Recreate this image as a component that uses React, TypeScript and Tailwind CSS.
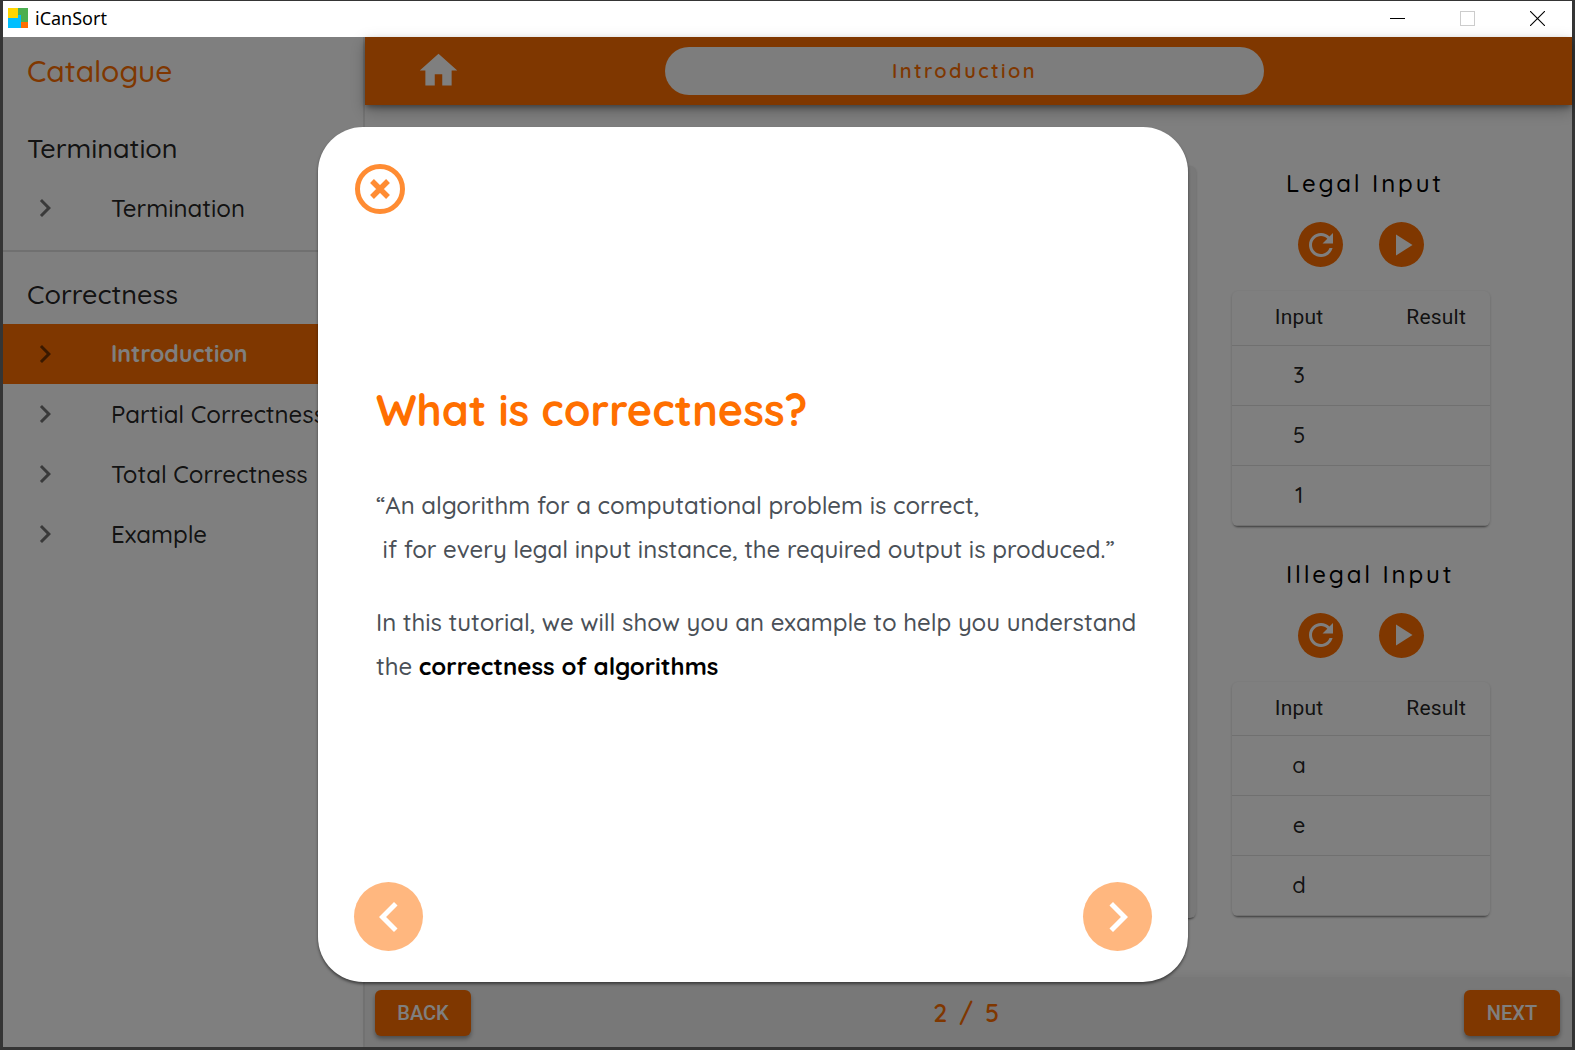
import React from "react";

const chevronRight = "M10 6 8.59 7.41 13.17 12l-4.58 4.59L10 18l6-6z";
const chevronLeft = "M15.41 7.41 14 6l-6 6 6 6 1.41-1.41L10.83 12z";

function Icon({ d, className }: { d: string; className: string }) {
  return (
    <svg viewBox="0 0 24 24" fill="currentColor" aria-hidden="true" className={className}>
      <path d={d} />
    </svg>
  );
}

function TitleBar() {
  return (
    <header className="flex h-9 items-center bg-white pb-0.5">
      <svg viewBox="0 0 20 20" shapeRendering="crispEdges" aria-hidden="true" className="ml-[5px] size-5">
        <rect width="10" height="10" fill="#ffd600" />
        <rect x="10" width="10" height="14" fill="#4caf50" />
        <path d="M0 10h10V7h3v13H0z" fill="#00bfff" />
        <rect x="13" y="14" width="7" height="6" fill="#ff6f00" />
      </svg>
      <span className="ml-[7px] font-['Noto_Sans',sans-serif] text-[18px] leading-6 text-black">iCanSort</span>
      <div className="ml-auto flex h-full">
        <button aria-label="Minimize" className="flex w-[70px] items-center justify-center">
          <svg viewBox="0 0 15 15" shapeRendering="crispEdges" className="size-[15px]">
            <rect y="7" width="15" height="1" fill="#000" />
          </svg>
        </button>
        <button aria-label="Maximize" disabled className="flex w-[70px] items-center justify-center">
          <span className="size-[15px] border border-[#cccccc]" />
        </button>
        <button aria-label="Close window" className="flex w-[70px] items-center justify-center">
          <svg viewBox="0 0 15 15" className="size-[15px]" stroke="#000" strokeWidth="1.1">
            <path d="M0 0l15 15M15 0L0 15" />
          </svg>
        </button>
      </div>
    </header>
  );
}

function NavGroup({ title, items, active }: { title: string; items: string[]; active?: string }) {
  return (
    <section className="py-3">
      <h2 className="pl-6 text-[27px] font-medium leading-[60px] text-black/87">{title}</h2>
      <ul>
        {items.map((item) => {
          const on = item === active;
          return (
            <li key={item}>
              <a
                href={"#" + item.toLowerCase().replace(" ", "-")}
                aria-current={on ? "page" : undefined}
                className={
                  on
                    ? "flex h-[60px] items-center gap-12 bg-[#ff6f00] pl-6 text-[23px] font-bold text-white"
                    : "flex h-[60px] items-center gap-12 pl-6 text-[24px] font-medium text-black/87"
                }
              >
                <Icon d={chevronRight} className="size-9 shrink-0 text-black/54" />
                <span className="whitespace-nowrap">{item}</span>
              </a>
            </li>
          );
        })}
      </ul>
    </section>
  );
}

function Sidebar() {
  return (
    <nav aria-label="Catalogue" className="w-[362px] shrink-0 overflow-hidden border-r-2 border-[#e8e8e8] bg-white">
      <h1 className="pl-6 text-[30px] font-medium leading-[69px] text-[#ff6f00]">Catalogue</h1>
      <NavGroup title="Termination" items={["Termination"]} />
      <hr className="border-t-2 border-[#e0e0e0]" />
      <NavGroup
        title="Correctness"
        active="Introduction"
        items={["Introduction", "Partial Correctness", "Total Correctness", "Example"]}
      />
    </nav>
  );
}

function InputPanel({ title, values }: { title: string; values: string[] }) {
  return (
    <section>
      <h3 className="pl-[54px] text-[24px] font-medium leading-[34px] tracking-[0.12em] text-black">{title}</h3>
      <div className="mt-[22px] flex justify-center gap-9">
        <button
          aria-label={"Reset " + title}
          className="flex size-[45px] items-center justify-center rounded-full bg-[#ff6f00] text-white"
        >
          <Icon
            className="size-9"
            d="M17.65 6.35C16.2 4.9 14.21 4 12 4c-4.42 0-7.99 3.58-7.99 8s3.57 8 7.99 8c3.73 0 6.84-2.55 7.73-6h-2.08c-.82 2.33-3.04 4-5.65 4-3.31 0-6-2.69-6-6s2.69-6 6-6c1.66 0 3.14.69 4.22 1.78L13 11h7V4l-2.35 2.35z"
          />
        </button>
        <button
          aria-label={"Run " + title}
          className="flex size-[45px] items-center justify-center rounded-full bg-[#ff6f00] text-white"
        >
          <Icon className="size-9" d="M8 5v14l11-7z" />
        </button>
      </div>
      <div className="mt-6 overflow-hidden rounded-md bg-white shadow-[0_3px_2px_-2px_rgba(0,0,0,0.4),0_1px_3px_rgba(0,0,0,0.2)]">
        <table className="w-full table-fixed border-collapse text-[22px] text-black/87">
          <thead>
            <tr className="h-[54px] border-b border-[#e0e0e0] font-['Roboto',sans-serif] text-[21px] tracking-[0.01em]">
              <th className="w-[52%] p-0 text-center font-normal">Input</th>
              <th className="p-0 pr-6 text-right font-normal">Result</th>
            </tr>
          </thead>
          <tbody>
            {values.map((v) => (
              <tr key={v} className="h-[60px] border-b border-[#e0e0e0]">
                <td className="p-0 text-center font-medium">{v}</td>
                <td />
              </tr>
            ))}
          </tbody>
        </table>
      </div>
    </section>
  );
}

function Workspace() {
  const navButton =
    "h-[46px] w-24 rounded-md bg-[#ff6f00] font-['Roboto',sans-serif] text-[20px] font-medium text-white shadow-[0_3px_4px_rgba(0,0,0,0.35)]";
  return (
    <div className="flex min-w-0 flex-1 flex-col bg-white">
      <div className="z-0 grid h-[68px] grid-cols-[1fr_2fr_1fr] items-center bg-[#ff6f00] pr-2 shadow-[0_3px_6px_-1px_rgba(0,0,0,0.4),0_6px_15px_rgba(0,0,0,0.26)]">
        <button aria-label="Home" className="mb-0.5 ml-[51px] size-[45px] text-white">
          <Icon className="size-[45px]" d="M10 20v-6h4v6h5v-8h3L12 3 2 12h3v8z" />
        </button>
        <div className="rounded-full bg-[#fafafa] text-center text-[20px] font-semibold leading-[48px] tracking-[0.12em] text-[#ff6f00]">
          Introduction
        </div>
      </div>
      <main className="flex flex-1 gap-9 pb-[59px] pl-9 pr-[82px] pt-[61px]">
        <div className="flex-1 rounded-md bg-[#f0f0f0] shadow-[0_3px_2px_-2px_rgba(0,0,0,0.4),0_1px_3px_rgba(0,0,0,0.2)]" />
        <div className="flex w-[258px] shrink-0 flex-col gap-[31px]">
          <InputPanel title="Legal Input" values={["3", "5", "1"]} />
          <InputPanel title="Illegal Input" values={["a", "e", "d"]} />
        </div>
      </main>
      <footer className="flex h-[70px] items-center justify-between bg-[#f0f0f0] pl-2.5 pr-3 pt-0.5 shadow-[0_-2px_8px_rgba(0,0,0,0.06)]">
        <button className={navButton}>BACK</button>
        <span className="text-[25px] font-semibold tracking-widest text-[#ff6f00]">2 / 5</span>
        <button className={navButton}>NEXT</button>
      </footer>
    </div>
  );
}

function TutorialDialog() {
  const arrow = "flex size-[69px] items-center justify-center rounded-full bg-[#ffb77f] text-white";
  return (
    <div className="absolute inset-0 z-10 bg-black/50 pb-[65px] pl-[315px] pr-6 pt-[90px]">
      <div
        role="dialog"
        aria-modal="true"
        aria-labelledby="dialog-title"
        className="flex h-full w-full max-w-[870px] flex-col rounded-[45px] bg-white px-9 pb-[31px] pt-9 shadow-[0_2px_3px_rgba(0,0,0,0.5)]"
      >
        <button aria-label="Close" className="size-[52px] text-[#ff8c33]">
          <svg viewBox="0 0 52 52" fill="none" stroke="currentColor" strokeWidth="5" className="size-[52px]">
            <circle cx="26" cy="26" r="22.5" />
            <path d="M18 18l16 16M34 18L18 34" strokeWidth="5.4" />
          </svg>
        </button>
        <div className="flex flex-1 flex-col justify-center pb-[30px] pl-[22px]">
          <h2 id="dialog-title" className="text-[43px] font-bold leading-[60px] text-[#ff6f00]">
            What is correctness?
          </h2>
          <p className="mt-[43px] text-[24px] font-medium leading-[44px] text-[#4a5057]">
            “An algorithm for a computational problem is correct,
            <br />
            &nbsp;if for every legal input instance, the required output is produced.”
          </p>
          <p className="mt-[29px] text-[24px] font-medium leading-[44px] text-[#4a5057]">
            In this tutorial, we will show you an example to help you understand
            <br />
            the <strong className="font-bold text-black">correctness of algorithms</strong>
          </p>
        </div>
        <div className="flex justify-between">
          <button aria-label="Previous" className={arrow}>
            <Icon d={chevronLeft} className="size-[60px]" />
          </button>
          <button aria-label="Next" className={arrow}>
            <Icon d={chevronRight} className="size-[60px]" />
          </button>
        </div>
      </div>
    </div>
  );
}

export default function App() {
  return (
    <div className="flex min-h-screen flex-col border-x-[3px] border-b-[3px] border-t border-[#353535] font-['Quicksand','Open_Sans',sans-serif]">
      <TitleBar />
      <div className="relative flex flex-1">
        <Sidebar />
        <Workspace />
        <TutorialDialog />
      </div>
    </div>
  );
}
